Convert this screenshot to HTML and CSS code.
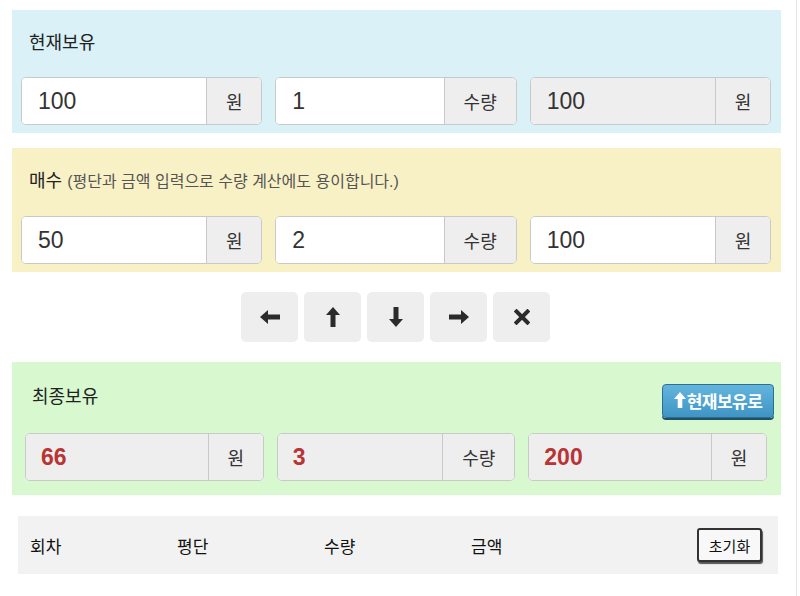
FILE: index.html
```html
<!DOCTYPE html>
<html lang="ko">
<head>
    <meta charset="utf-8">
    <title>평단 계산기</title>
    <link rel="stylesheet" href="styles.css">
</head>
<body>
    <div class="frame">
        <div class="calc">

            <div class="panel panel-now">
                <h3 class="panel-title">현재보유</h3>
                <div class="fields">
                    <div class="group">
                        <input class="field" type="text" value="100">
                        <span class="addon">원</span>
                    </div>
                    <div class="group">
                        <input class="field" type="text" value="1">
                        <span class="addon addon-wide">수량</span>
                    </div>
                    <div class="group">
                        <input class="field" type="text" value="100" disabled>
                        <span class="addon">원</span>
                    </div>
                </div>
            </div>

            <div class="panel panel-buy">
                <h3 class="panel-title">매수 <small class="hint">(평단과 금액 입력으로 수량 계산에도 용이합니다.)</small></h3>
                <div class="fields">
                    <div class="group">
                        <input class="field" type="text" value="50">
                        <span class="addon">원</span>
                    </div>
                    <div class="group">
                        <input class="field" type="text" value="2">
                        <span class="addon addon-wide">수량</span>
                    </div>
                    <div class="group">
                        <input class="field" type="text" value="100">
                        <span class="addon">원</span>
                    </div>
                </div>
            </div>

            <div class="tools">
                <button class="tool" type="button" title="왼쪽">
                    <svg width="20" height="14" viewBox="0 0 20 14"><path d="M0 7 L8 0 V4.5 H20 V9.5 H8 V14 Z"/></svg>
                </button>
                <button class="tool" type="button" title="위">
                    <svg width="14" height="20" viewBox="0 0 14 20"><path d="M7 0 L14 8 H9.5 V20 H4.5 V8 H0 Z"/></svg>
                </button>
                <button class="tool" type="button" title="아래">
                    <svg width="14" height="20" viewBox="0 0 14 20"><path d="M7 20 L14 12 H9.5 V0 H4.5 V12 H0 Z"/></svg>
                </button>
                <button class="tool" type="button" title="오른쪽">
                    <svg width="20" height="14" viewBox="0 0 20 14"><path d="M20 7 L12 0 V4.5 H0 V9.5 H12 V14 Z"/></svg>
                </button>
                <button class="tool" type="button" title="지우기">
                    <svg width="16" height="16" viewBox="0 0 16 16"><path d="M2.5 2.5 L13.5 13.5 M13.5 2.5 L2.5 13.5" stroke-width="4" stroke-linecap="square"/></svg>
                </button>
            </div>

            <div class="panel panel-result">
                <div class="result-head">
                    <h3 class="panel-title">최종보유</h3>
                    <button class="btn-apply" type="button">
                        <svg width="12" height="16" viewBox="0 0 12 16"><path d="M6 0 L12 7 H8.3 V16 H3.7 V7 H0 Z"/></svg>현재보유로
                    </button>
                </div>
                <div class="fields">
                    <div class="group">
                        <input class="field result" type="text" value="66" readonly>
                        <span class="addon">원</span>
                    </div>
                    <div class="group">
                        <input class="field result" type="text" value="3" readonly>
                        <span class="addon addon-wide">수량</span>
                    </div>
                    <div class="group">
                        <input class="field result" type="text" value="200" readonly>
                        <span class="addon">원</span>
                    </div>
                </div>
            </div>

            <div class="history">
                <span class="col">회차</span>
                <span class="col">평단</span>
                <span class="col">수량</span>
                <span class="col">금액</span>
                <button class="btn-reset" type="button">초기화</button>
            </div>

        </div>
    </div>
</body>
</html>
```

FILE: styles.css
```css
*{
    margin: 0;
    box-sizing: border-box;
}
body{
    margin: 0;
    background-color: #fff;
    font-family: "Liberation Sans", "Noto Sans CJK KR", sans-serif;
    color: #333;
}

.frame{
    width: 797px;
    height: 596px;
    border-right: 1px solid #e4e4e4;
    padding: 10px 0 0 12px;
    overflow: hidden;
}
.calc{
    width: 769px;
}

.panel{
    padding: 20px 10px 8px 9px;
}
.panel-now{
    background-color: rgb(217, 241, 247);
}
.panel-buy{
    margin-top: 15px;
    background-color: rgb(249, 241, 198);
}
.panel-result{
    margin-top: 20px;
    padding: 22px 14px 14px 13px;
    background-color: rgb(216, 248, 208);
}

.panel-title{
    height: 26px;
    line-height: 26px;
    font-size: 18px;
    font-weight: normal;
    color: #222;
    margin: 0 0 21px 8px;
}
.panel-buy .panel-title{
    margin-bottom: 22px;
}
.hint{
    font-size: 16px;
    color: #555;
}

.fields{
    display: grid;
    grid-template-columns: 1fr 1fr 1fr;
    gap: 13px;
}
.group{
    display: flex;
    height: 48px;
    border: 1px solid #c9c9c9;
    border-radius: 5px;
    overflow: hidden;
    background-color: #fff;
}
.field{
    flex: 1;
    min-width: 0;
    border: none;
    padding: 0 0 0 16px;
    font-family: "Liberation Sans", sans-serif;
    font-size: 23px;
    color: #333;
    background-color: #fff;
    outline: none;
}
.field:disabled{
    background-color: #eee;
    color: #333;
}
.field.result{
    background-color: #eee;
    color: #b93434;
    font-weight: bold;
    font-size: 23px;
    padding-left: 15px;
}
.addon{
    width: 55px;
    display: flex;
    align-items: center;
    justify-content: center;
    background-color: #eee;
    border-left: 1px solid #c9c9c9;
    font-size: 18px;
    color: #333;
}
.addon-wide{
    width: 72px;
}

.tools{
    display: flex;
    justify-content: center;
    gap: 6px;
    margin: 20px 2px 0 0;
    height: 50px;
}
.tool{
    width: 57px;
    height: 50px;
    border: none;
    border-radius: 5px;
    background-color: #eee;
    display: flex;
    align-items: center;
    justify-content: center;
    padding: 0;
}
.tool svg{
    fill: #2b2b2b;
    stroke: #2b2b2b;
}
.tool svg path{
    stroke-width: 0;
}
.tool:last-child svg path{
    stroke-width: 4;
    fill: none;
}

.result-head{
    display: flex;
    justify-content: space-between;
    align-items: center;
    margin-bottom: 15px;
    margin-right: -7px;
    padding-left: 7px;
}
.result-head .panel-title{
    margin: 0 0 8px 0;
}
.btn-apply{
    width: 112px;
    height: 34px;
    display: flex;
    align-items: center;
    justify-content: center;
    gap: 1px;
    border: 1px solid #2d6f93;
    border-radius: 4px;
    background: linear-gradient(#62b6dd, #3f94c4);
    box-shadow: 0 2px 0 #1f4f6a;
    color: #fff;
    font-family: "Noto Sans CJK KR", sans-serif;
    font-weight: bold;
    font-size: 17px;
    letter-spacing: -0.5px;
    padding: 0 0 2px 0;
}
.btn-apply svg{
    fill: #fff;
}

.history{
    display: flex;
    align-items: center;
    margin: 21px 0 0 6px;
    width: 760px;
    height: 58px;
    background-color: #f2f2f2;
    padding: 0 16px 0 12px;
}
.col{
    width: 147px;
    font-family: "Noto Sans CJK KR", sans-serif;
    font-size: 17px;
    color: #111;
}
.btn-reset{
    margin-left: auto;
    width: 65px;
    height: 34px;
    border: 2px solid #333;
    border-radius: 3px;
    background-color: #f8f8f8;
    box-shadow: 1px 2px 1px #555;
    font-family: "Noto Sans CJK KR", sans-serif;
    font-size: 15px;
    color: #111;
    padding: 0;
}
```
